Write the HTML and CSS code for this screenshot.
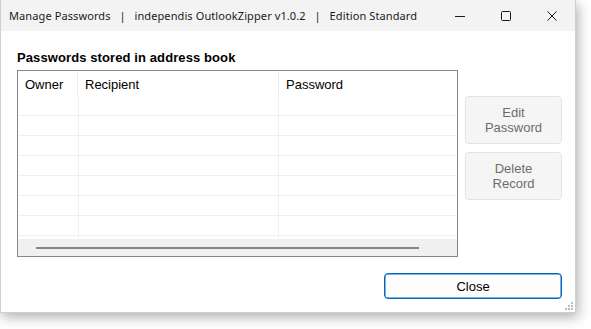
FILE: index.html
```html
<!DOCTYPE html>
<html>
<head>
<meta charset="utf-8">
<link rel="stylesheet" href="styles.css">
</head>
<body>
<div class="window">
  <div class="titlebar">
    <div class="title">Manage Passwords &nbsp; | &nbsp; independis OutlookZipper v1.0.2 &nbsp; | &nbsp; Edition Standard</div>
    <div class="caption">
      <div class="cbtn"><svg width="10" height="10" viewBox="0 0 10 10"><path d="M0 5.5H10" stroke="#1a1a1a" stroke-width="1"/></svg></div>
      <div class="cbtn"><svg width="10" height="10" viewBox="0 0 10 10"><rect x="0.5" y="0.5" width="9" height="9" rx="1" fill="none" stroke="#1a1a1a" stroke-width="1"/></svg></div>
      <div class="cbtn"><svg width="10" height="10" viewBox="0 0 10 10"><path d="M0.5 0.5L9.5 9.5M9.5 0.5L0.5 9.5" stroke="#1a1a1a" stroke-width="1"/></svg></div>
    </div>
  </div>
  <div class="content">
    <div class="main">
      <div class="left">
        <div class="label">Passwords stored in address book</div>
        <div class="list">
          <div class="header">
            <div class="hcell c1">Owner</div>
            <div class="hcell c2">Recipient</div>
            <div class="hcell c3">Password</div>
          </div>
          <div class="rows">
            <div class="row"><div class="cell c1"></div><div class="cell c2"></div><div class="cell c3"></div></div>
            <div class="row"><div class="cell c1"></div><div class="cell c2"></div><div class="cell c3"></div></div>
            <div class="row"><div class="cell c1"></div><div class="cell c2"></div><div class="cell c3"></div></div>
            <div class="row"><div class="cell c1"></div><div class="cell c2"></div><div class="cell c3"></div></div>
            <div class="row"><div class="cell c1"></div><div class="cell c2"></div><div class="cell c3"></div></div>
            <div class="row"><div class="cell c1"></div><div class="cell c2"></div><div class="cell c3"></div></div>
            <div class="row"><div class="cell c1"></div><div class="cell c2"></div><div class="cell c3"></div></div>
            <div class="row partial"><div class="cell c1"></div><div class="cell c2"></div><div class="cell c3"></div></div>
          </div>
          <div class="hscroll"><div class="thumb"></div></div>
        </div>
      </div>
      <div class="side">
        <button class="btn disabled">Edit<br>Password</button>
        <button class="btn disabled">Delete<br>Record</button>
      </div>
    </div>
    <div class="footer">
      <button class="btn primary">Close</button>
    </div>
    <div class="grip">
      <svg width="8" height="8" viewBox="0 0 8 8" fill="#bdbdbd">
        <rect x="6" y="0" width="2" height="2"/>
        <rect x="3" y="3" width="2" height="2"/><rect x="6" y="3" width="2" height="2"/>
        <rect x="0" y="6" width="2" height="2"/><rect x="3" y="6" width="2" height="2"/><rect x="6" y="6" width="2" height="2"/>
      </svg>
    </div>
  </div>
</div>
</body>
</html>
```

FILE: styles.css
```css
html, body {
  margin: 0;
  padding: 0;
  background: #ffffff;
}
body {
  width: 591px;
  height: 329px;
  overflow: hidden;
}
.window {
  width: 574px;
  height: 312px;
  border: 1px solid #cfcfcf;
  border-top: 0;
  background: #ffffff;
  box-shadow: 2px 4px 12px rgba(0, 0, 0, 0.32);
  display: flex;
  flex-direction: column;
  font-family: "Liberation Sans", Arial, sans-serif;
  font-size: 13px;
  color: #000;
  position: relative;
}
.titlebar {
  height: 31px;
  background: #f3f3f3;
  display: flex;
  align-items: center;
  justify-content: space-between;
  flex-shrink: 0;
}
.title {
  font-family: "Noto Sans", sans-serif;
  font-size: 11px;
  letter-spacing: 0.1px;
  color: #1a1a1a;
  padding-left: 8px;
  white-space: nowrap;
}
.caption {
  display: flex;
  height: 31px;
}
.cbtn {
  width: 46px;
  height: 31px;
  display: flex;
  align-items: center;
  justify-content: center;
}
.content {
  flex: 1;
  display: flex;
  flex-direction: column;
  padding: 19px 13px 0 16px;
  position: relative;
}
.main {
  display: flex;
  gap: 7px;
}
.left {
  display: flex;
  flex-direction: column;
}
.label {
  font-weight: bold;
  line-height: 16px;
  height: 16px;
  margin-bottom: 4px;
  letter-spacing: 0.1px;
}
.list {
  width: 439px;
  height: 185px;
  border: 1px solid #828790;
  display: flex;
  flex-direction: column;
  overflow: hidden;
}
.header {
  display: flex;
  height: 25px;
  flex-shrink: 0;
}
.hcell {
  line-height: 25px;
  padding-left: 7px;
  box-sizing: border-box;
  border-right: 1px solid #ebebeb;
  height: 24px;
  margin-top: 1px;
}
.c1 { width: 60px; }
.c2 { width: 201px; }
.c3 { width: 178px; border-right: 0; }
.rows {
  flex: 1;
  overflow: hidden;
}
.row {
  display: flex;
  height: 20px;
  border-bottom: 1px solid #f0f0f0;
  box-sizing: border-box;
}
.row.partial {
  border-bottom: 0;
}
.cell {
  box-sizing: border-box;
  border-right: 1px solid #f0f0f0;
  height: 100%;
}
.cell.c1 { width: 61px; }
.cell.c2 { width: 200px; }
.cell.c3 { border-right: 0; }
.hscroll {
  height: 17px;
  background: #f0f0f0;
  display: flex;
  align-items: center;
  flex-shrink: 0;
}
.thumb {
  margin-left: 18px;
  width: 383px;
  height: 2px;
  background: #858585;
}
.side {
  display: flex;
  flex-direction: column;
  padding-top: 46px;
  gap: 8px;
}
.btn {
  font-family: "Liberation Sans", Arial, sans-serif;
  font-size: 13px;
  line-height: 15px;
  border-radius: 4px;
  box-sizing: border-box;
  padding: 0;
  margin: 0;
}
.btn.disabled {
  width: 97px;
  height: 48px;
  background: #f5f5f5;
  border: 1px solid #e3e3e3;
  color: #6d6d6d;
}
.footer {
  display: flex;
  justify-content: flex-end;
  margin-top: 16px;
}
.btn.primary {
  width: 178px;
  height: 26px;
  background: #fdfdfd;
  border: 1px solid #0067c0;
  color: #000;
  box-shadow: inset 0 0 0 0.5px #0067c0;
}
.grip {
  position: absolute;
  right: 2px;
  bottom: 2px;
  width: 8px;
  height: 8px;
  line-height: 0;
}
```
